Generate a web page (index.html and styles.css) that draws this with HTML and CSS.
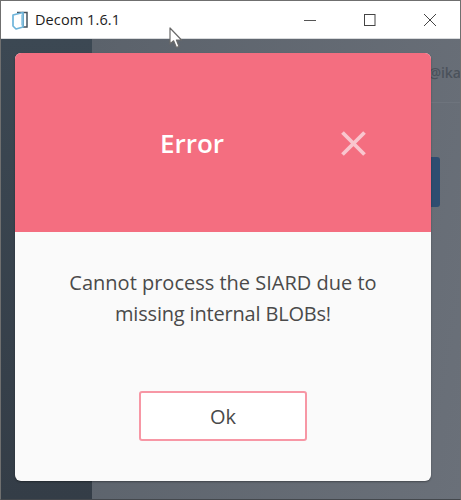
FILE: index.html
```html
<!DOCTYPE html>
<html lang="en">
<head>
<meta charset="utf-8">
<title>Decom 1.6.1</title>
<link rel="stylesheet" href="styles.css">
</head>
<body>
<div class="window">
  <header class="titlebar">
    <svg class="app-icon" width="16" height="20" viewBox="0 0 16 20">
      <path d="M5 2.5H15V17H11" fill="none" stroke="#44525e" stroke-width="1.5"/>
      <path d="M11 3.5V16" stroke="#44525e" stroke-width="1.5"/>
      <path d="M1 5L11 2.5V16L11 17L4 19L1 16Z" fill="#fff" stroke="#6db4da" stroke-width="1.7" stroke-linejoin="round"/>
      <path d="M9.6 4.5V15.5" stroke="#9ccde8" stroke-width="1"/>
    </svg>
    <span class="app-title">Decom 1.6.1</span>
    <div class="win-controls">
      <span class="win-btn"><svg width="12" height="12" viewBox="0 0 12 12"><path d="M0 6.5H12" stroke="#555" stroke-width="1"/></svg></span>
      <span class="win-btn"><svg width="12" height="12" viewBox="0 0 12 12"><rect x=".5" y=".5" width="10.5" height="11" fill="none" stroke="#444" stroke-width="1"/></svg></span>
      <span class="win-btn"><svg width="12" height="12" viewBox="0 0 12 12"><path d="M0 0L12 12M12 0L0 12" stroke="#444" stroke-width="1"/></svg></span>
    </div>
  </header>
  <div class="app">
    <aside class="sidebar"></aside>
    <main class="content">
      <div class="user">@ika</div>
      <div class="bg-line"></div>
      <div class="bg-button"></div>
    </main>
    <section class="modal">
      <div class="modal-head">
        <h1 class="modal-title">Error</h1>
        <svg class="modal-close" width="26" height="26" viewBox="0 0 26 26"><path d="M2.5 2.5L24.5 24.5M24.5 2.5L2.5 24.5" stroke="#f9c6ce" stroke-width="3.8"/></svg>
      </div>
      <div class="modal-body">
        <p class="modal-text">Cannot process the SIARD due to<br><span class="line-two">missing internal BLOBs!</span></p>
        <button class="ok-btn">Ok</button>
      </div>
    </section>
  </div>
  <svg class="cursor" width="14" height="23" viewBox="0 0 14 23"><path d="M1 1V17L4.6 13.8L7.4 20.5L10 19.4L7.4 13H12.5Z" fill="#fff" stroke="#6a6a6a" stroke-width="1.2" stroke-linejoin="round"/></svg>
</div>
</body>
</html>
```
FILE: styles.css
```css
* { box-sizing: border-box; }
html, body { margin: 0; padding: 0; }
body { width: 461px; height: 500px; overflow: hidden; font-family: "Open Sans", "Liberation Sans", sans-serif; background: #fff; }
.window { position: relative; width: 461px; height: 500px; border: 1px solid #6f6f6f; border-bottom-color: #44484d; display: flex; flex-direction: column; overflow: hidden; }
.titlebar { height: 38px; flex: none; display: flex; align-items: center; background: #fff; padding-left: 11px; border-bottom: 1px solid #d8dadc; }
.app-icon { margin-right: 7px; flex: none; }
.app-title { font-size: 14.5px; color: #1c1c1c; letter-spacing: .1px; }
.win-controls { margin-left: auto; display: flex; }
.win-btn { width: 60px; height: 37px; display: flex; align-items: center; justify-content: center; }
.app { position: relative; flex: 1; display: flex; background: #5f666f; }
.sidebar { width: 91px; flex: none; background: linear-gradient(#3c4853, #343d47); }
.content { flex: 1; position: relative; background: linear-gradient(100deg, #5b626b, #6a7079); }
.user { position: absolute; top: 24px; right: -1px; font-size: 14px; font-weight: 600; color: #4b525b; }
.bg-line { position: absolute; left: 0; right: 0; top: 63px; height: 1px; background: #6e747d; }
.bg-button { position: absolute; left: 320px; top: 118px; width: 28px; height: 50px; border-radius: 3px; background: #2f4d70; }
.modal { position: absolute; left: 14px; top: 14px; width: 416px; height: 428px; border-radius: 6px; overflow: hidden; display: flex; flex-direction: column; background: #fafafa; box-shadow: 0 1px 2px rgba(0,0,0,.35); }
.modal-head { height: 179px; flex: none; display: flex; align-items: center; padding-left: 145px; background: #f46e80; }
.modal-title { margin: 0; font-size: 26px; font-weight: 600; color: #fff; line-height: 1; }
.modal-close { margin-left: 116px; }
.modal-body { flex: 1; display: flex; flex-direction: column; align-items: center; }
.modal-text { margin: 35px 0 0; font-size: 20px; line-height: 31px; color: #4a4a4a; text-align: center; }
.line-two { letter-spacing: -.18px; }
.ok-btn { margin-top: 62px; width: 168px; height: 50px; border: 2px solid #f797a5; border-radius: 3px; background: #fff; font: 400 20px "Open Sans", "Liberation Sans", sans-serif; color: #4a4a4a; }
.cursor { position: absolute; left: 168px; top: 26px; }
```
